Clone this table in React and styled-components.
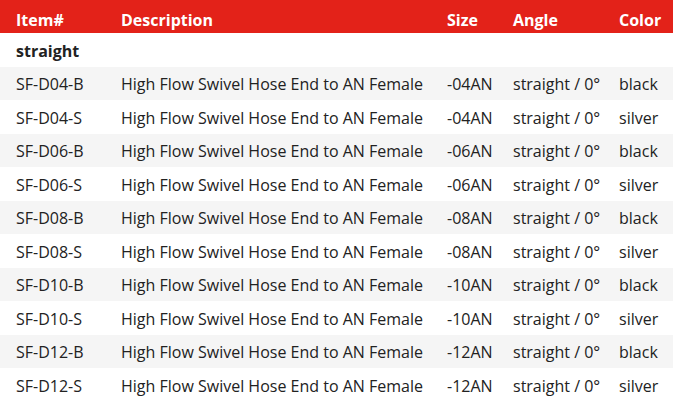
import styled, { createGlobalStyle } from "styled-components";

const Global = createGlobalStyle`
  *, *::before, *::after { box-sizing: border-box; }
  body {
    margin: 0;
    background: #fff;
    font-family: "Open Sans", "Liberation Sans", sans-serif;
    color: #222;
  }
`;

const Table = styled.table`
  width: 673px;
  border-collapse: collapse;
  table-layout: fixed;
  font-size: 16px;
`;

const Head = styled.th`
  background: #e32219;
  color: #fff;
  font-weight: 700;
  text-align: left;
  height: 33px;
  padding: 6px 0 0 ${p => (p.$first ? 16 : 8)}px;
  width: ${p => p.$w}px;
`;

const Row = styled.tr`
  background: ${p => (p.$shade ? "#f5f5f5" : "#fff")};
`;

const Cell = styled.td`
  height: 33.5px;
  padding: 2px 0 0 ${p => (p.$first ? 16 : 8)}px;
  white-space: nowrap;
  font-weight: ${p => (p.$bold ? 700 : 400)};
`;

const cols = [
  { label: "Item#", w: 113 },
  { label: "Description", w: 326 },
  { label: "Size", w: 66 },
  { label: "Angle", w: 106 },
  { label: "Color", w: 62 },
];

const items = ["04", "06", "08", "10", "12"].flatMap(n => [
  { id: `SF-D${n}-B`, size: `-${n}AN`, color: "black" },
  { id: `SF-D${n}-S`, size: `-${n}AN`, color: "silver" },
]);

export default function App() {
  return (
    <>
      <Global />
      <Table>
        <thead>
          <tr>
            {cols.map((c, i) => (
              <Head key={c.label} $w={c.w} $first={i === 0}>{c.label}</Head>
            ))}
          </tr>
        </thead>
        <tbody>
          <Row>
            <Cell $first $bold colSpan={5}>straight</Cell>
          </Row>
          {items.map((it, i) => (
            <Row key={it.id} $shade={i % 2 === 0}>
              <Cell $first>{it.id}</Cell>
              <Cell>High Flow Swivel Hose End to AN Female</Cell>
              <Cell>{it.size}</Cell>
              <Cell>straight / 0°</Cell>
              <Cell>{it.color}</Cell>
            </Row>
          ))}
        </tbody>
      </Table>
    </>
  );
}
